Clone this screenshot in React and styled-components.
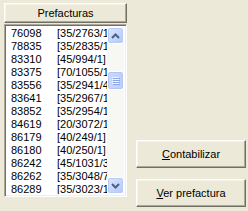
import React from "react";
import styled, { createGlobalStyle } from "styled-components";

const Global = createGlobalStyle`
  html, body {
    margin: 0;
    padding: 0;
    background: #ece9d8;
  }
  body {
    font-family: "Liberation Sans", Arial, sans-serif;
    font-size: 11px;
    color: #000;
  }
`;

const Window = styled.div`
  display: flex;
  width: 248px;
  height: 211px;
  box-sizing: border-box;
  padding: 3px 2px 4px 4px;
  gap: 9px;
`;

const LeftPane = styled.div`
  display: flex;
  flex-direction: column;
  width: 123px;
  gap: 1px;
`;

const Header = styled.div`
  height: 20px;
  box-sizing: border-box;
  display: flex;
  align-items: center;
  justify-content: center;
  border: 1px solid;
  border-color: #fff #716f64 #716f64 #fff;
  box-shadow: inset -1px -1px #aca899, inset 1px 1px #f5f4ea;
  background: #ece9d8;
`;

const ListBox = styled.div`
  display: flex;
  height: 173px;
  box-sizing: border-box;
  border: 1px solid;
  border-color: #aca899 #fff #fff #aca899;
  box-shadow: inset 1px 1px #716f64, inset -1px -1px #f1efe2;
  padding: 2px;
  background: #fff;
`;

const Rows = styled.div`
  flex: 1;
  overflow: hidden;
  padding-left: 4px;
`;

const Row = styled.div`
  display: grid;
  grid-template-columns: 46px 1fr;
  height: 13px;
  line-height: 13px;
  white-space: nowrap;
`;

const Cell = styled.span`
  overflow: hidden;
`;

const ScrollBar = styled.div`
  width: 17px;
  display: flex;
  flex-direction: column;
  background: #f7f7f3;
`;

const ArrowBtn = styled.div`
  width: 17px;
  height: 17px;
  box-sizing: border-box;
  border: 1px solid #fff;
  border-radius: 3px;
  display: flex;
  align-items: center;
  justify-content: center;
  background: linear-gradient(135deg, #dce7fd 0%, #c3d3fb 60%, #b4c7f5 100%);
  box-shadow: inset 0 0 0 1px #b8cbf6;
`;

const Track = styled.div`
  flex: 1;
  display: flex;
  flex-direction: column;
`;

const Thumb = styled.div`
  height: 19px;
  box-sizing: border-box;
  border: 1px solid #fff;
  border-radius: 3px;
  background: linear-gradient(90deg, #c9d8fc 0%, #bccefa 100%);
  box-shadow: inset 0 0 0 1px #b2c5f4;
  display: flex;
  flex-direction: column;
  align-items: center;
  justify-content: center;
  gap: 1px;
`;

const Grip = styled.div`
  width: 7px;
  height: 1px;
  background: #eef3fe;
  box-shadow: 1px 1px #8ca5e0;
`;

const RightPane = styled.div`
  flex: 1;
  display: flex;
  flex-direction: column;
  justify-content: flex-end;
  gap: 11px;
`;

const Button = styled.div`
  width: 110px;
  height: 28px;
  box-sizing: border-box;
  display: flex;
  align-items: center;
  justify-content: center;
  border: 1px solid;
  border-color: #fff #716f64 #716f64 #fff;
  box-shadow: inset -1px -1px #aca899, inset 1px 1px #f5f4ea;
  background: #ece9d8;
  font-size: 11px;
`;

const rows = [
  ["76098", "[35/2763/1"],
  ["78835", "[35/2835/1"],
  ["83310", "[45/994/1]"],
  ["83375", "[70/1055/1"],
  ["83556", "[35/2941/4"],
  ["83641", "[35/2967/1"],
  ["83852", "[35/2954/1"],
  ["84619", "[20/3072/1"],
  ["86179", "[40/249/1]"],
  ["86180", "[40/250/1]"],
  ["86242", "[45/1031/3"],
  ["86262", "[35/3048/7"],
  ["86289", "[35/3023/1"],
];

const Chevron = ({ up }) => (
  <svg width="9" height="6" viewBox="0 0 9 6">
    <path
      d={up ? "M1 5 L4.5 1.5 L8 5" : "M1 1 L4.5 4.5 L8 1"}
      fill="none"
      stroke="#4d6185"
      strokeWidth="2"
    />
  </svg>
);

export default function App() {
  return (
    <>
      <Global />
      <Window>
        <LeftPane>
          <Header>Prefacturas</Header>
          <ListBox>
            <Rows>
              {rows.map(([id, ref]) => (
                <Row key={id}>
                  <Cell>{id}</Cell>
                  <Cell>{ref}</Cell>
                </Row>
              ))}
            </Rows>
            <ScrollBar>
              <ArrowBtn>
                <Chevron up />
              </ArrowBtn>
              <Track>
                <Thumb style={{ marginTop: 27 }}>
                  <Grip />
                  <Grip />
                  <Grip />
                  <Grip />
                </Thumb>
              </Track>
              <ArrowBtn>
                <Chevron />
              </ArrowBtn>
            </ScrollBar>
          </ListBox>
        </LeftPane>
        <RightPane>
          <Button>
            <span>
              <u>C</u>ontabilizar
            </span>
          </Button>
          <Button>
            <span>
              <u>V</u>er prefactura
            </span>
          </Button>
        </RightPane>
      </Window>
    </>
  );
}
